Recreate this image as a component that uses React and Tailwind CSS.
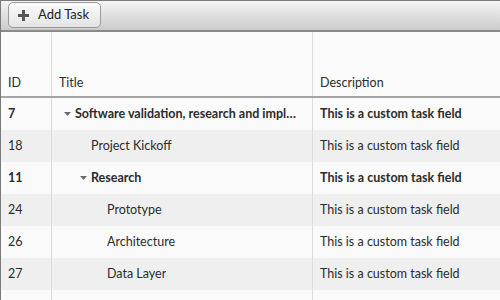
const rows = [
  { id: 7, title: "Software validation, research and implementation", level: 0, parent: true },
  { id: 18, title: "Project Kickoff", level: 1 },
  { id: 11, title: "Research", level: 1, parent: true },
  { id: 24, title: "Prototype", level: 2 },
  { id: 26, title: "Architecture", level: 2 },
  { id: 27, title: "Data Layer", level: 2 },
];

// text starts at 23 + 16 * level; a caret takes 11px before it
const leafPad = ["pl-[23px]", "pl-[39px]", "pl-[55px]"];
const parentPad = ["pl-[12px]", "pl-[28px]", "pl-[44px]"];

function Caret() {
  return (
    <svg width="7" height="4" viewBox="0 0 7 4" className="mr-[4px] shrink-0">
      <path d="M0 0h7L3.5 4z" fill="#6b6b6b" />
    </svg>
  );
}

export default function App() {
  return (
    <div className="h-[300px] w-[500px] overflow-hidden border-l border-t border-[#7a7a7a] bg-[#fafafa] font-['Lato',sans-serif] text-[12.5px] text-[#2b2b2b]">
      <div className="flex h-[31px] items-center border-b-2 border-[#8a8a8a] bg-gradient-to-b from-[#f4f4f4] to-[#cbcbcb] pb-[1px] pl-[7px]">
        <button className="flex h-[26px] w-[93px] items-center gap-[9px] rounded-[5px] border border-[#9a9a9a] bg-gradient-to-b from-[#fbfbfb] to-[#e4e4e4] pl-[9px] text-[13px] text-[#222]">
          <svg width="11" height="11" viewBox="0 0 11 11">
            <path d="M4 0h3v4h4v3H7v4H4V7H0V4h4z" fill="#555" />
          </svg>
          Add Task
        </button>
      </div>
      <div className="grid h-[66px] grid-cols-[51px_261px_1fr] border-b-2 border-[#a5a5a5] bg-[#fbfbfb]">
        <div className="flex items-end border-r border-[#dcdcdc] pb-[3px] pl-[7px]">ID</div>
        <div className="flex items-end border-r border-[#dcdcdc] pb-[3px] pl-[7px]">Title</div>
        <div className="flex items-end pb-[3px] pl-[7px]">Description</div>
      </div>
      {rows.map((r, i) => (
        <div
          key={r.id}
          className={`grid h-[32px] grid-cols-[51px_261px_1fr] ${i % 2 ? "bg-[#efefef]" : "bg-[#fafafa]"} ${r.parent ? "font-bold" : ""}`}
        >
          <div className="flex items-center border-r border-[#dcdcdc] pl-[7px]">{r.id}</div>
          <div className={`flex min-w-0 items-center border-r border-[#dcdcdc] pr-[12px] ${r.parent ? parentPad[r.level] : leafPad[r.level]}`}>
            {r.parent && <Caret />}
            <span className="truncate">{r.title}</span>
          </div>
          <div className="flex min-w-0 items-center pl-[7px]">
            <span className="truncate">This is a custom task field</span>
          </div>
        </div>
      ))}
      <div className="grid h-[32px] grid-cols-[51px_261px_1fr]">
        <div className="border-r border-[#dcdcdc]" />
        <div className="border-r border-[#dcdcdc]" />
        <div />
      </div>
    </div>
  );
}
